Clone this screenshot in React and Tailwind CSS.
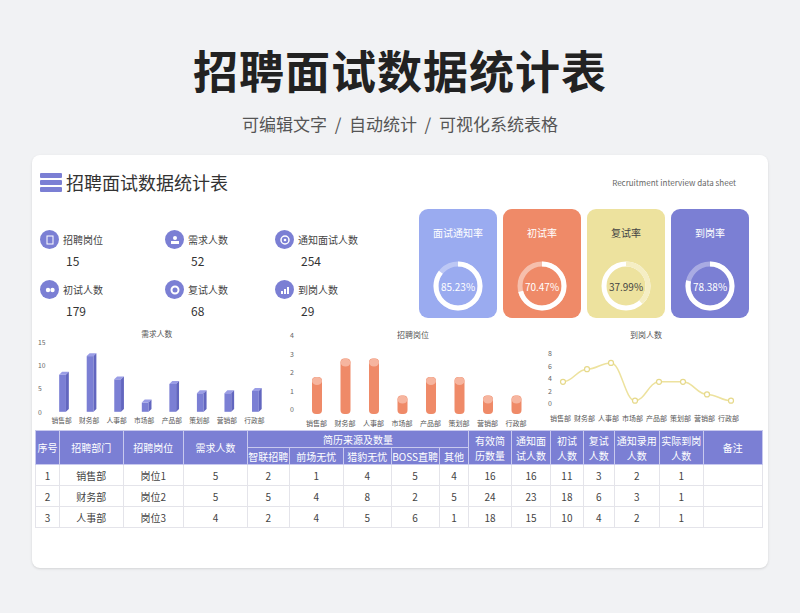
import React from "react";

const F = { fontFamily: '"Noto Sans CJK SC","Noto Sans",sans-serif' };

function Ring({ pct, color, track, text }) {
  const r = 22, c = 2 * Math.PI * r;
  return (
    <div className="relative w-[56px] h-[56px]">
      <svg width="56" height="56" viewBox="0 0 56 56">
        <circle cx="28" cy="28" r={r} fill="none" stroke={track} strokeWidth="5" />
        <circle cx="28" cy="28" r={r} fill="none" stroke={color} strokeWidth="5"
          strokeDasharray={`${c * pct} ${c}`} transform="rotate(-90 28 28)" />
      </svg>
      <div className="absolute inset-0 flex items-center justify-center text-[10px]" style={{ color: text }}>{(pct * 100).toFixed(2)}%</div>
    </div>
  );
}

const depts = ["销售部", "财务部", "人事部", "市场部", "产品部", "策划部", "营销部", "行政部"];

function BarChart() {
  const v = [8, 12, 7, 2, 6, 4, 4, 4.5];
  return (
    <svg width="240" height="100" viewBox="0 0 240 100">
      <text x="110" y="9" fontSize="8" fill="#555">需求人数</text>
      {[15, 10, 5, 0].map((t, i) => <text key={t} x="3" y={17 + i * 24} fontSize="7" fill="#666">{t}</text>)}
      {v.map((x, i) => {
        const h = x * 4.8, X = 25 + i * 28.5, Y = 86 - h;
        return <g key={i}>
          <rect x={X} y={Y} width="7" height={h} fill="#7b7fd4" />
          <polygon points={`${X},${Y} ${X + 3},${Y - 3} ${X + 10},${Y - 3} ${X + 7},${Y}`} fill="#9a9de6" />
          <polygon points={`${X + 7},${Y} ${X + 10},${Y - 3} ${X + 10},${86 - 3} ${X + 7},86`} fill="#6266bf" />
          <text x={X - 8} y="98" fontSize="7" fill="#555">{depts[i]}</text>
        </g>;
      })}
    </svg>
  );
}

function CylChart() {
  const v = [2, 3, 3, 1, 2, 2, 1, 1];
  return (
    <svg width="250" height="100" viewBox="0 0 250 100">
      <text x="110" y="11" fontSize="8" fill="#555">招聘岗位</text>
      {[4, 3, 2, 1, 0].map((t, i) => <text key={t} x="3" y={11 + i * 18.5} fontSize="7" fill="#666">{t}</text>)}
      {v.map((x, i) => {
        const h = x * 18.5, X = 25 + i * 28.5, Y = 87 - h;
        return <g key={i}>
          <rect x={X} y={Y} width="10" height={h} rx="4" fill="#ef8a68" />
          <ellipse cx={X + 5} cy={Y + 4} rx="5" ry="4" fill="#f6b59f" />
          <text x={X - 6} y="99" fontSize="7" fill="#555">{depts[i]}</text>
        </g>;
      })}
    </svg>
  );
}

function LineChart() {
  const v = [4, 6, 7, 1, 4, 4, 2, 1];
  const pts = v.map((x, i) => [18 + i * 24, 80 - x * 6.3]);
  let d = `M${pts[0][0]},${pts[0][1]}`;
  for (let i = 1; i < pts.length; i++) {
    const [x0, y0] = pts[i - 1], [x1, y1] = pts[i];
    d += ` C${x0 + 10},${y0} ${x1 - 10},${y1} ${x1},${y1}`;
  }
  return (
    <svg width="220" height="100" viewBox="0 0 220 100">
      <text x="85" y="11" fontSize="8" fill="#555">到岗人数</text>
      {[8, 6, 4, 2, 0].map((t, i) => <text key={t} x="3" y={32 + i * 12.6 - 3} fontSize="7" fill="#666">{t}</text>)}
      <path d={d} fill="none" stroke="#ede29e" strokeWidth="1.5" />
      {pts.map((p, i) => <circle key={i} cx={p[0]} cy={p[1]} r="2.5" fill="#fff" stroke="#e6d98a" strokeWidth="1.2" />)}
      {depts.map((t, i) => <text key={i} x={5 + i * 24} y="94" fontSize="7" fill="#555">{t}</text>)}
    </svg>
  );
}

function Icon({ children }) {
  return <div className="w-[19px] h-[19px] rounded-full bg-[#7b7fd4] flex items-center justify-center">{children}</div>;
}

const stats = [
  ["招聘岗位", "15", <rect x="3" y="2" width="6" height="8" fill="none" stroke="#fff" strokeWidth="1" />],
  ["需求人数", "52", <><circle cx="6" cy="4" r="2" fill="#fff" /><rect x="2" y="7" width="8" height="3" fill="#fff" /></>],
  ["通知面试人数", "254", <><circle cx="6" cy="6" r="4" fill="none" stroke="#fff" strokeWidth="1.5" /><circle cx="6" cy="6" r="1.3" fill="#fff" /></>],
  ["初试人数", "179", <><circle cx="4" cy="6" r="2.2" fill="#fff" /><circle cx="8.5" cy="6" r="2.2" fill="#fff" /></>],
  ["复试人数", "68", <circle cx="6" cy="6" r="3.5" fill="none" stroke="#fff" strokeWidth="2" />],
  ["到岗人数", "29", <><rect x="2" y="7" width="2" height="3" fill="#fff" /><rect x="5" y="5" width="2" height="5" fill="#fff" /><rect x="8" y="3" width="2" height="7" fill="#fff" /></>],
];

const cards = [
  ["面试通知率", 0.8523, "bg-[#9aabf0]", "#fff", "rgba(255,255,255,0.35)", "#fff", "text-white"],
  ["初试率", 0.7047, "bg-[#ef8a68]", "#fff", "rgba(255,255,255,0.45)", "#fff", "text-white"],
  ["复试率", 0.3799, "bg-[#ede29e]", "#f5eec4", "#fff", "#444", "text-[#444]"],
  ["到岗率", 0.7838, "bg-[#7b7fd4]", "#fff", "rgba(255,255,255,0.35)", "#fff", "text-white"],
];

const rows = [
  [1, "销售部", "岗位1", 5, 2, 1, 4, 5, 4, 16, 16, 11, 3, 2, 1],
  [2, "财务部", "岗位2", 5, 5, 4, 8, 2, 5, 24, 23, 18, 6, 3, 1],
  [3, "人事部", "岗位3", 4, 2, 4, 5, 6, 1, 18, 15, 10, 4, 2, 1],
];
const widths = [17, 45, 43, 45, 30, 38, 34, 34, 21, 30, 28, 23, 22, 32, 31, 42];
const heads2 = [["有效简", "历数量"], ["通知面", "试人数"], ["初试", "人数"], ["复试", "人数"], ["通知录用", "人数"], ["实际到岗", "人数"]];

export default function App() {
  const th = "border border-[#c8c9ee] font-normal text-white leading-[15px]";
  const td = "border border-[#e4e4ea] h-[21px] text-center text-[#444]";
  return (
    <div className="w-[800px] h-[613px] bg-[#f1f2f4] flex flex-col items-center" style={F}>
      <div className="mt-[40px] text-[45px] font-bold text-[#222] leading-[60px] tracking-[1px]">招聘面试数据统计表</div>
      <div className="mt-[12px] text-[17px] text-[#555] leading-[24px] whitespace-pre">可编辑文字  /  自动统计  /  可视化系统表格</div>
      <div className="mt-[19px] w-[736px] h-[413px] bg-white rounded-[8px] shadow-sm px-[3px] pt-[14px] flex flex-col">
        <div className="flex items-center px-[5px]">
          <div className="flex flex-col gap-[2px] w-[22px]">
            <div className="h-[5px] bg-[#7b7fd4] rounded-[1px]" /><div className="h-[5px] bg-[#7b7fd4] rounded-[1px]" /><div className="h-[5px] bg-[#7b7fd4] rounded-[1px]" />
          </div>
          <div className="ml-[4px] text-[18px] text-[#333]">招聘面试数据统计表</div>
          <div className="ml-auto mr-[24px] text-[8px] text-[#666]">Recruitment interview data sheet</div>
        </div>
        <div className="flex mt-[6px]">
          <div className="grid grid-cols-[125px_110px_120px] gap-y-[10px] mt-[28px] ml-[5px] h-fit">
            {stats.map(([l, n, ic]) => (
              <div key={l}>
                <div className="flex items-center gap-[4px]">
                  <Icon><svg width="12" height="12" viewBox="0 0 12 12">{ic}</svg></Icon>
                  <span className="text-[10px] text-[#444]">{l}</span>
                </div>
                <div className="ml-[26px] mt-[3px] text-[12px] text-[#333]">{n}</div>
              </div>
            ))}
          </div>
          <div className="flex gap-[6px] ml-[24px] mt-[7px]">
            {cards.map(([t, p, bg, c, tr, tx, tc]) => (
              <div key={t} className={`w-[78px] h-[109px] rounded-[9px] ${bg} flex flex-col items-center`}>
                <div className={`mt-[16px] text-[10px] ${tc}`}>{t}</div>
                <div className="mt-[18px]"><Ring pct={p} color={c} track={tr} text={tx} /></div>
              </div>
            ))}
          </div>
        </div>
        <div className="flex mt-[7px] h-[100px]">
          <BarChart /><div className="ml-[20px]"><CylChart /></div><div className="ml-[8px]"><LineChart /></div>
        </div>
        <table className="mt-[3px] border-collapse text-[10px] w-[728px] table-fixed">
          <colgroup>{widths.map((w, i) => <col key={i} style={{ width: w * 728 / 565 }} />)}</colgroup>
          <thead className="bg-[#7b7fd4]">
            <tr className="h-[17px]">
              {["序号", "招聘部门", "招聘岗位", "需求人数"].map(h => <th key={h} rowSpan={2} className={th}>{h}</th>)}
              <th colSpan={5} className={th}>简历来源及数量</th>
              {heads2.map(([a, b]) => <th key={a} rowSpan={2} className={th}>{a}<br />{b}</th>)}
              <th rowSpan={2} className={th}>备注</th>
            </tr>
            <tr className="h-[17px]">
              {["智联招聘", "前场无忧", "猎豹无忧", "BOSS直聘", "其他"].map(h => <th key={h} className={th + " whitespace-nowrap"}>{h}</th>)}
            </tr>
          </thead>
          <tbody>
            {rows.map(r => (
              <tr key={r[0]}>{r.map((c, i) => <td key={i} className={td}>{c}</td>)}<td className={td}></td></tr>
            ))}
          </tbody>
        </table>
      </div>
    </div>
  );
}
